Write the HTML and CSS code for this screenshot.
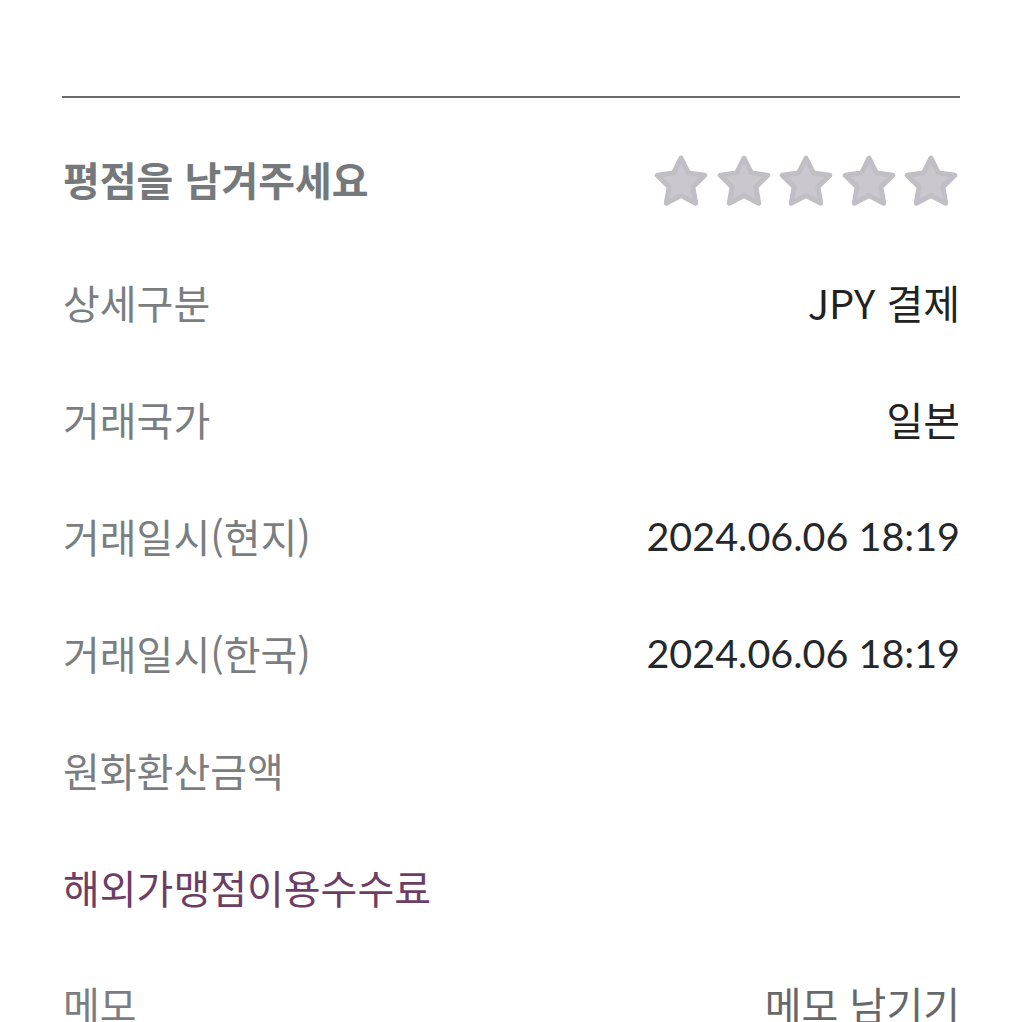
FILE: index.html
```html
<!DOCTYPE html>
<html lang="ko">
<head>
<meta charset="UTF-8">
<title>거래 상세</title>
<link rel="stylesheet" href="styles.css">
</head>
<body>
<div id="detail-area">
    <div class="rule"></div>

    <div class="row row-rating">
        <span class="label label-title">평점을 남겨주세요</span>
        <div class="stars">
            <svg class="star" viewBox="0 0 58 52"><path d="M29 3 L36.35 17.89 L52.78 20.27 L40.89 31.86 L43.69 48.23 L29 40.5 L14.31 48.23 L17.11 31.86 L5.22 20.27 L21.65 17.89 Z"/></svg>
            <svg class="star" viewBox="0 0 58 52"><path d="M29 3 L36.35 17.89 L52.78 20.27 L40.89 31.86 L43.69 48.23 L29 40.5 L14.31 48.23 L17.11 31.86 L5.22 20.27 L21.65 17.89 Z"/></svg>
            <svg class="star" viewBox="0 0 58 52"><path d="M29 3 L36.35 17.89 L52.78 20.27 L40.89 31.86 L43.69 48.23 L29 40.5 L14.31 48.23 L17.11 31.86 L5.22 20.27 L21.65 17.89 Z"/></svg>
            <svg class="star" viewBox="0 0 58 52"><path d="M29 3 L36.35 17.89 L52.78 20.27 L40.89 31.86 L43.69 48.23 L29 40.5 L14.31 48.23 L17.11 31.86 L5.22 20.27 L21.65 17.89 Z"/></svg>
            <svg class="star" viewBox="0 0 58 52"><path d="M29 3 L36.35 17.89 L52.78 20.27 L40.89 31.86 L43.69 48.23 L29 40.5 L14.31 48.23 L17.11 31.86 L5.22 20.27 L21.65 17.89 Z"/></svg>
        </div>
    </div>

    <div class="row">
        <span class="label">상세구분</span>
        <span class="value">JPY 결제</span>
    </div>
    <div class="row">
        <span class="label">거래국가</span>
        <span class="value">일본</span>
    </div>
    <div class="row">
        <span class="label">거래일시(현지)</span>
        <span class="value value-num">2024.06.06 18:19</span>
    </div>
    <div class="row">
        <span class="label">거래일시(한국)</span>
        <span class="value value-num">2024.06.06 18:19</span>
    </div>
    <div class="row">
        <span class="label">원화환산금액</span>
        <span class="value"></span>
    </div>
    <div class="row">
        <span class="label label-link">해외가맹점이용수수료</span>
        <span class="value"></span>
    </div>
    <div class="row">
        <span class="label">메모</span>
        <span class="value value-memo">메모 남기기</span>
    </div>
</div>
</body>
</html>
```

FILE: styles.css
```css
body {
    margin: 0;
    background-color: #FFFFFF;
    font-family: "Noto Sans CJK KR", "Noto Sans", sans-serif;
}

#detail-area {
    padding: 96px 62px 0px 62px;
}

.rule {
    height: 2px;
    background-color: #6A6C6E;
}

.row {
    display: flex;
    justify-content: space-between;
    align-items: center;
    height: 117px;
}

.row-rating {
    margin-top: 17px;
    height: 128px;
}

.label {
    font-size: 40px;
    line-height: 1;
    color: #7B7E81;
    margin-left: 1px;
}

.label-title {
    font-weight: bold;
    color: #75797C;
}

.label-link {
    color: #6C3E66;
}

.value {
    font-size: 40px;
    line-height: 1;
    color: #222222;
}

.value-num {
    font-family: Lato, "Noto Sans CJK KR", sans-serif;
    font-size: 39.5px;
    color: #25282B;
}

.value-memo {
    color: #66686A;
}

.stars {
    display: flex;
    gap: 4.5px;
    margin-top: 4px;
}

.star {
    width: 58px;
    height: 52px;
}

.star path {
    fill: #CAC8CE;
    stroke: #C1BFC5;
    stroke-width: 5;
    stroke-linejoin: round;
}
```
